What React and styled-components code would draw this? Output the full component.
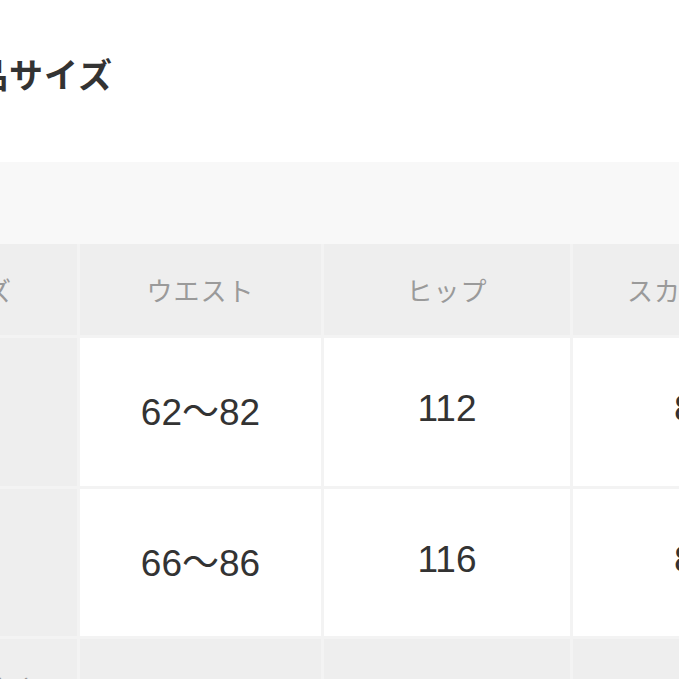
import styled, { createGlobalStyle } from "styled-components";

const GlobalStyle = createGlobalStyle`
  html, body {
    margin: 0;
    padding: 0;
    background: #ffffff;
  }
  body {
    font-family: "Noto Sans CJK JP", "Noto Sans", sans-serif;
    overflow: hidden;
  }
`;

const columns = ["サイズ", "ウエスト", "ヒップ", "スカート丈"];

const rows = [
  { label: "M", values: ["62〜82", "112", "80"] },
  { label: "L", values: ["66〜86", "116", "82"] },
];

const Page = styled.div`
  width: 679px;
  height: 679px;
  overflow: hidden;
`;

const Shift = styled.div`
  margin-left: -133px;
  width: 960px;
`;

const TitleBar = styled.div`
  height: 162px;
  box-sizing: border-box;
  padding: 52px 0 0 72px;
`;

const Title = styled.h2`
  margin: 0;
  font-size: 34px;
  line-height: 44px;
  font-weight: 700;
  color: #333333;
  letter-spacing: 1px;
`;

const Band = styled.div`
  height: 82px;
  background: #f8f8f8;
`;

const Grid = styled.div`
  display: grid;
  grid-template-columns: 210px 241px 246px 243px;
  grid-template-rows: 91px 148px 147px 100px;
  gap: 3px;
  background: #f3f3f3;
`;

const Cell = styled.div`
  display: flex;
  align-items: ${(p) => (p.$top ? "flex-start" : "center")};
  justify-content: center;
  background: ${(p) => (p.$head ? "#eeeeee" : "#ffffff")};
  color: ${(p) => (p.$head ? "#9a9a9a" : "#333333")};
  font-size: ${(p) => (p.$head ? "26px" : "37px")};
  font-family: ${(p) =>
    p.$head
      ? `"Noto Sans CJK JP", sans-serif`
      : `"Liberation Sans", "Noto Sans CJK JP", sans-serif`};
  padding-top: ${(p) => (p.$top ? "30px" : "0")};
  padding-bottom: ${(p) => (p.$head ? "0" : "6px")};
  box-sizing: border-box;
  letter-spacing: ${(p) => (p.$head ? "1px" : "0")};
`;

export default function App() {
  return (
    <>
      <GlobalStyle />
      <Page>
        <Shift>
          <TitleBar>
            <Title>商品サイズ</Title>
          </TitleBar>
          <Band />
          <Grid>
            {columns.map((c) => (
              <Cell key={c} $head>
                {c}
              </Cell>
            ))}
            {rows.map((r) => (
              <>
                <Cell key={r.label} $head>
                  {r.label}
                </Cell>
                {r.values.map((v, i) => (
                  <Cell key={r.label + i}>{v}</Cell>
                ))}
              </>
            ))}
            <Cell $head $top>
              着丈・ゆき
            </Cell>
            <Cell $head />
            <Cell $head />
            <Cell $head />
          </Grid>
        </Shift>
      </Page>
    </>
  );
}
